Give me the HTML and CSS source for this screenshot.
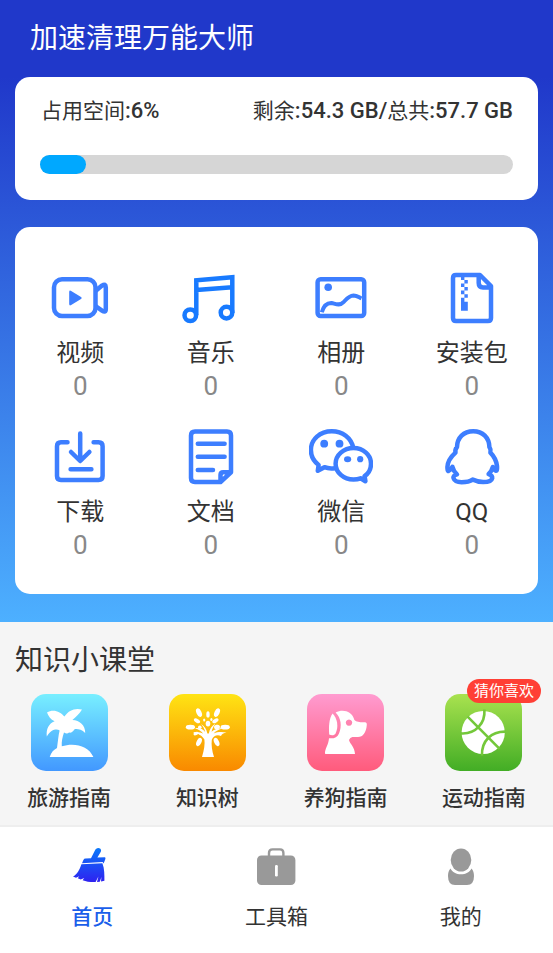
FILE: index.html
```html
<!DOCTYPE html>
<html lang="zh-CN">
<head>
  <meta charset="UTF-8" />
  <meta name="viewport" content="width=device-width, initial-scale=1.0"/>
  <title>加速清理万能大师</title>
  <link rel="stylesheet" href="styles.css">
</head>
<body>
  <div class="hero">
    <h1 class="app-title">加速清理万能大师</h1>

    <section class="card storage">
      <div class="storage-info">
        <span>占用空间<b>:6%</b></span>
        <span>剩余<b>:54.3 GB/</b>总共<b>:57.7 GB</b></span>
      </div>
      <div class="bar" role="progressbar" aria-label="占用空间" aria-valuenow="6">
        <div class="bar-fill"></div>
      </div>
    </section>

    <section class="card files">
      <a href="#video" class="file">
        <svg class="file-icon" viewBox="0 0 64 64">
          <rect x="6" y="13.2" width="41.5" height="36.8" rx="8"/>
          <path d="M47.5 25L54 19.6Q57.8 17.2 57.8 21.5V43Q57.8 47.2 54 44.6L47.5 40"/>
          <path class="solid" d="M21.2 26Q21.2 23.8 23.2 24.9L33 31Q34.6 32 33 33L23.2 39.1Q21.2 40.2 21.2 38Z"/>
        </svg>
        <span class="file-name">视频</span>
        <span class="file-count">0</span>
      </a>
      <a href="#music" class="file">
        <svg class="file-icon music" viewBox="0 0 64 64">
          <path d="M17.3 49V14.2L53.3 11.2V47M17.3 24L53.3 21.2"/>
          <circle cx="11.3" cy="49.2" r="5.8"/>
          <circle cx="47.5" cy="46.6" r="5.8"/>
        </svg>
        <span class="file-name">音乐</span>
        <span class="file-count">0</span>
      </a>
      <a href="#photos" class="file">
        <svg class="file-icon" viewBox="0 0 64 64">
          <rect x="8.6" y="13.2" width="46.6" height="36.8" rx="3"/>
          <circle class="solid" cx="19.2" cy="21.3" r="3.8"/>
          <path class="thin" d="M12.8 46.3C14 42 17 36.8 22.5 37C26.5 37.8 30.5 40.4 34.5 36.2C38 32.4 40 29.6 44.5 29.4C48 29.4 49.5 31 52.5 32.4"/>
        </svg>
        <span class="file-name">相册</span>
        <span class="file-count">0</span>
      </a>
      <a href="#packages" class="file">
        <svg class="file-icon" viewBox="0 0 64 64">
          <path d="M40 9H16Q13 9 13 12V52Q13 55 16 55H48Q51 55 51 52V20ZM38.7 9V17Q38.7 21.4 43 21.4H51"/>
          <path class="solid" d="M21 10h3.4v4H21zM24.4 14h3.4v3.5h-3.4zM21 17.5h3.4V21H21zM24.4 21h3.4v3.6h-3.4zM21 24.6h3.4v3.6H21zM24.4 28.2h3.4v3.5h-3.4zM21 31.7h3.4v4h3.4v9H21z"/>
        </svg>
        <span class="file-name">安装包</span>
        <span class="file-count">0</span>
      </a>
      <a href="#downloads" class="file">
        <svg class="file-icon" viewBox="0 0 64 64">
          <path class="round" d="M19.5 17.2H13Q9 17.2 9 21.2V51Q9 55 13 55H50.6Q54.6 55 54.6 51V21.2Q54.6 17.2 50.6 17.2H45.6M32.2 8.5V35M23 27L32.2 36L41.4 27M22.6 44.3H43.4"/>
        </svg>
        <span class="file-name">下载</span>
        <span class="file-count">0</span>
      </a>
      <a href="#documents" class="file">
        <svg class="file-icon" viewBox="0 0 64 64">
          <path d="M41.5 57H16Q12 57 12 53V10.5Q12 6.5 16 6.5H48Q52 6.5 52 10.5V47.3ZM41.5 56V50Q41.5 47.3 44.2 47.3H52"/>
          <path class="round" d="M18.8 18.7H45.6M18.8 31.7H45.6M18.8 45H34"/>
        </svg>
        <span class="file-name">文档</span>
        <span class="file-count">0</span>
      </a>
      <a href="#wechat" class="file">
        <svg class="file-icon" viewBox="0 0 64 64">
          <path d="M44.3 23C42.2 12.8 33.5 6.3 22.8 6.3C11 6.3 1.9 14.4 1.9 25.1C1.9 31.2 4.8 36.4 9.6 40L8.8 45.8L15.4 42.2C18.6 43.5 22.5 43.7 26 43.2"/>
          <path d="M44.5 23C34.6 23 26.6 30 26.6 38.7S34.6 54.6 44.5 54.6C47 54.6 49.4 54.2 51.6 53.3L56.4 56.2L55.6 51.2C59.8 48.3 62 43.8 62 38.7C62 30 54.4 23 44.5 23Z"/>
          <circle class="solid" cx="15.2" cy="18.7" r="3.9"/>
          <circle class="solid" cx="30.5" cy="18.7" r="3.9"/>
          <ellipse class="solid" cx="38.6" cy="34.2" rx="3.6" ry="3"/>
          <circle class="solid" cx="51.2" cy="34.2" r="3.1"/>
        </svg>
        <span class="file-name">微信</span>
        <span class="file-count">0</span>
      </a>
      <a href="#qq" class="file">
        <svg class="file-icon" viewBox="0 0 64 64">
          <path d="M33.2 6.2C23.6 6.2 17.2 12.8 17 22C15.5 23.8 15 25.6 15.5 27.6C11 31.6 7.6 37.4 7.4 42C7.4 44.6 7.8 46.4 8.6 46C10 45.5 11.4 43.6 12.4 41.8C13.2 45 14.6 47.4 17 49.4C13.8 50.2 13 51.6 13.6 53.4C14.6 56.4 17.6 57.2 21.6 57.2C26 57.2 30 56.4 32.6 54.6C35.6 56.2 39.4 57 43.2 57C47.8 57 51.6 56 52.2 53.2C52.4 51.2 51.4 50 48.6 49.2C50.8 47 52.2 44.6 52.8 42C53.8 44 54.8 45.6 56 45.8C57 45.8 57.2 43.6 57 41C56.4 36.4 54.4 31.6 50.4 27.6C51 25.6 50.6 23.8 49.4 22C49.2 12.8 42.8 6.2 33.2 6.2Z"/>
        </svg>
        <span class="file-name">QQ</span>
        <span class="file-count">0</span>
      </a>
    </section>
  </div>

  <section class="courses">
    <h2 class="courses-title">知识小课堂</h2>
    <div class="course-list">
      <a href="#travel" class="course">
        <span class="course-icon travel">
          <svg viewBox="0 0 77 77">
            <path d="M18.7 63C20 58.6 23 55.4 26 54C27 47 27.4 41 28.6 36.4C26 34.4 20 35 15.8 42.4C15 35 17.6 29.6 23.6 27.2C19.6 25.6 17.6 22.6 16 18.6C22 14.6 29.6 17.6 33.4 22.6C37.4 16.4 44 13.6 51 15.6C48.4 19.6 45.4 23 41.4 26C48.6 26.4 54.4 31 54.2 39C50.6 35.4 46.6 34.8 43.6 35.2C41.6 37.6 40.4 39.2 38 38.6C36.6 40 35 39.6 33 38.6C31.4 43 30.4 48 30.8 52.2C43 48.4 57.6 51.4 62.4 63Z"/>
          </svg>
        </span>
        <span class="course-name">旅游指南</span>
      </a>
      <a href="#tree" class="course">
        <span class="course-icon tree">
          <svg viewBox="0 0 77 77">
            <path d="M33 63C35.2 56 36 50 35.4 45.6C33.4 41.4 29 39.4 24 38.4C28 37.4 31.6 38.2 34.2 39.8C32.6 37.4 29.4 35 26 34.2C30.6 33.6 34 35 36.2 38C35.6 34.8 33.8 32 32 30C35.4 32 37.4 35 38.4 39.4H39.8C40.6 35 43 31.4 46.6 29.4C44.4 32 43 35 42.6 37.8C45.4 35 49.6 33.8 53.6 34.4C50 35.4 46.6 37 44.6 39.4C48.6 37.6 53.6 37.6 57.6 38.6C54.6 39.4 52.6 40 52 42C47.6 40 44 42.6 42.8 45.8C42.2 51 43 57 45 63Z"/>
            <ellipse cx="30" cy="18.6" rx="2.5" ry="4.6" transform="rotate(-25 30 18.6)"/>
            <ellipse cx="48" cy="18.6" rx="2.5" ry="4.6" transform="rotate(25 48 18.6)"/>
            <ellipse cx="39" cy="20.4" rx="1.7" ry="3.2"/>
            <ellipse cx="28" cy="26.8" rx="1.9" ry="3.4" transform="rotate(-60 28 26.8)"/>
            <ellipse cx="46.4" cy="26.8" rx="1.9" ry="3.4" transform="rotate(60 46.4 26.8)"/>
            <ellipse cx="35.2" cy="26" rx="1.1" ry="1.5"/>
            <ellipse cx="42.4" cy="25.6" rx="1.1" ry="1.5"/>
            <ellipse cx="39" cy="29.6" rx="2.3" ry="2.9"/>
            <ellipse cx="21.4" cy="33.2" rx="4.6" ry="2.4"/>
            <ellipse cx="56.2" cy="33.2" rx="4.6" ry="2.4"/>
            <ellipse cx="48" cy="33" rx="3" ry="2.2" transform="rotate(-15 48 33)"/>
            <circle cx="30.8" cy="33.2" r="1.8"/>
            <ellipse cx="27" cy="39.6" rx="2.6" ry="1.6" transform="rotate(-20 27 39.6)"/>
            <ellipse cx="30" cy="48" rx="2.4" ry="4.4" transform="rotate(25 30 48)"/>
            <ellipse cx="47.6" cy="48" rx="2.4" ry="4.4" transform="rotate(-25 47.6 48)"/>
          </svg>
        </span>
        <span class="course-name">知识树</span>
      </a>
      <a href="#dog" class="course">
        <span class="course-icon dog">
          <svg viewBox="0 0 77 77">
            <path d="M25.6 19.6C30.4 24.4 31.8 33 28.6 39.4C27.4 41.6 24.6 41.4 22.2 40.6C21.6 33 22 24.6 25.6 19.6Z"/>
            <path fill-rule="evenodd" d="M28.6 18.4C36 15 45 17 47.4 26C49.6 28.4 53.6 28.2 58 28.2Q60 28.2 59.8 31C59.2 38.4 56 43 51 43H45.4Q43 43.4 42 46C43 50.4 47.6 52.4 48 60H18.6Q17.6 60 18 58C18.8 53.4 21.4 50.6 22 44.2C26.6 44.8 30.4 43.4 32 39.4C35 32 34.2 24 28.6 18.4ZM42 25.4a3.2 3.2 0 1 0 .01 0Z"/>
          </svg>
        </span>
        <span class="course-name">养狗指南</span>
      </a>
      <a href="#sport" class="course">
        <span class="course-icon sport">
          <svg viewBox="0 0 77 77">
            <circle cx="38.2" cy="38.5" r="21.6"/>
            <path class="seam" d="M22.6 22.6L54.6 54.8M39.4 15.5C40.4 29 31 40.6 15.5 39.4M61 37.6C46 37.2 36.4 47 37 61.5"/>
          </svg>
        </span>
        <span class="course-name">运动指南</span>
        <span class="badge">猜你喜欢</span>
      </a>
    </div>
  </section>

  <nav class="tabs">
    <a href="#home" class="tab active">
      <svg class="tab-icon" viewBox="0 0 48 48">
        <defs>
          <linearGradient id="broom" x1="0" y1="5" x2="0" y2="39" gradientUnits="userSpaceOnUse">
            <stop offset="0" stop-color="#0a78fa"/>
            <stop offset="1" stop-color="#2e22f0"/>
          </linearGradient>
        </defs>
        <g fill="url(#broom)">
          <path d="M27.4 6.6Q29 4.2 31.4 5.2T32.8 8.8L29.4 14.6L36.8 14.2Q37.8 14.4 37.4 16L35.6 20.6L34.6 19L14 20.2L15.4 17Q16 15.6 17.6 15.6L23 15.2Z"/>
          <path d="M13.4 21.2L34.4 20.2C36.6 25.6 36.4 32 36.4 37.8L33 38.6L33.4 34L31.8 38.8L29 39L30.4 33.4L27.6 39C22.6 39.2 18.4 38.6 14.6 37.2L16.2 35L12.8 36.6L9.8 35.2L11.2 33.2L8 34.8L5 33.6C9 31.4 11.6 26.6 13.4 21.2Z"/>
        </g>
      </svg>
      <span>首页</span>
    </a>
    <a href="#tools" class="tab">
      <svg class="tab-icon" viewBox="0 0 48 48">
        <rect x="5" y="12.4" width="38.4" height="29.6" rx="4.5"/>
        <path class="outline" d="M17 13V10Q17 6.4 20.6 6.4H28Q31.4 6.4 31.4 10V13"/>
        <rect class="slot" x="23" y="22" width="2.8" height="11.4" rx="1.2"/>
      </svg>
      <span>工具箱</span>
    </a>
    <a href="#me" class="tab">
      <svg class="tab-icon" viewBox="0 0 48 48">
        <ellipse cx="24" cy="17" rx="10.3" ry="11.6"/>
        <path d="M13.4 25.4C15.4 29 19.4 31.2 24 31.2S32.6 29 34.6 25.4C36.4 27.6 37 30 37 33Q37 42 30 42H18Q11 42 11 33C11 30 11.6 27.6 13.4 25.4Z"/>
      </svg>
      <span>我的</span>
    </a>
  </nav>
</body>
</html>
```
FILE: styles.css
```css
* {
  margin: 0;
  padding: 0;
  box-sizing: border-box;
}

body {
  font-family: Roboto, 'Noto Sans CJK SC', sans-serif;
  color: #333;
  background-color: #fff;
  min-height: 100vh;
  display: flex;
  flex-direction: column;
}

a {
  color: inherit;
  text-decoration: none;
}

.hero {
  padding: 19px 15px 28px;
  background: linear-gradient(#2038ca 77px, #4db0ff);
}

.app-title {
  padding-left: 15px;
  margin-bottom: 18px;
  font-size: 28px;
  line-height: 40px;
  font-weight: 400;
  color: #fff;
}

.card {
  background-color: #fff;
  border-radius: 15px;
}

.storage {
  padding: 18px 25px 26px;
  margin-bottom: 27px;
}

.storage-info {
  display: flex;
  justify-content: space-between;
  margin-bottom: 28px;
  padding-left: 1px;
  font-size: 21px;
  line-height: 32px;
}

.storage-info b {
  font-size: 22px;
  font-weight: 500;
}

.bar {
  height: 19px;
  border-radius: 10px;
  background-color: #d6d6d6;
}

.bar-fill {
  width: 46px;
  height: 100%;
  border-radius: 10px;
  background-color: #00a8ff;
}

.files {
  display: grid;
  grid-template-columns: repeat(4, 1fr);
  row-gap: 23px;
  padding: 39px 1px 33px 0;
}

.file {
  display: flex;
  flex-direction: column;
  align-items: center;
}

.file-icon {
  width: 64px;
  height: 64px;
  fill: none;
  stroke: #3d7eff;
  stroke-width: 4.5;
  stroke-linejoin: round;
}

.file-icon.music {
  stroke: #187aff;
  stroke-linejoin: miter;
}

.file-icon .thin {
  stroke-width: 4;
}

.file-icon .round {
  stroke-linecap: round;
}

.file-icon .solid {
  fill: #3d7eff;
  stroke: none;
}

.file-name {
  margin-top: 5px;
  font-size: 24px;
  line-height: 36px;
}

.file-count {
  font-size: 26px;
  line-height: 31px;
  color: #888;
}

.courses {
  background-color: #f5f5f5;
  border-bottom: 2px solid #eee;
  padding: 19px 0 11px;
}

.courses-title {
  padding-left: 15px;
  margin-bottom: 13px;
  font-size: 28px;
  line-height: 40px;
  font-weight: 400;
}

.course-list {
  display: grid;
  grid-template-columns: repeat(4, 1fr);
}

.course {
  position: relative;
  display: flex;
  flex-direction: column;
  align-items: center;
}

.course-icon {
  width: 77px;
  height: 77px;
  border-radius: 15px;
}

.course-icon svg {
  display: block;
  fill: #fff;
}

.travel {
  background: linear-gradient(#78efff, #4298ff);
}

.tree {
  background: linear-gradient(#ffe414, #f98900);
}

.dog {
  background: linear-gradient(#ff9bd0, #ff5b7c);
}

.sport {
  background: linear-gradient(#a9e24f, #42ad25);
}

.seam {
  fill: none;
  stroke: #74c83a;
  stroke-width: 2.6;
}

.course-name {
  margin-top: 11px;
  font-size: 21px;
  line-height: 32px;
  font-weight: 500;
}

.badge {
  position: absolute;
  top: -15px;
  right: 12px;
  padding: 0 7px;
  border-radius: 12px;
  background-color: #ff3f35;
  color: #fff;
  font-size: 15px;
  line-height: 24px;
}

.tabs {
  flex: 1;
  display: grid;
  grid-template-columns: repeat(3, 1fr);
  padding-top: 16px;
}

.tab {
  display: flex;
  flex-direction: column;
  align-items: center;
  gap: 10px;
  font-size: 21px;
  line-height: 32px;
}

.tab-icon {
  width: 48px;
  height: 48px;
  fill: #999;
}

.tab-icon .outline {
  fill: none;
  stroke: #999;
  stroke-width: 2.4;
}

.tab-icon .slot {
  fill: #fff;
}

.tab.active {
  color: #1a5eea;
  font-weight: 500;
}
```
